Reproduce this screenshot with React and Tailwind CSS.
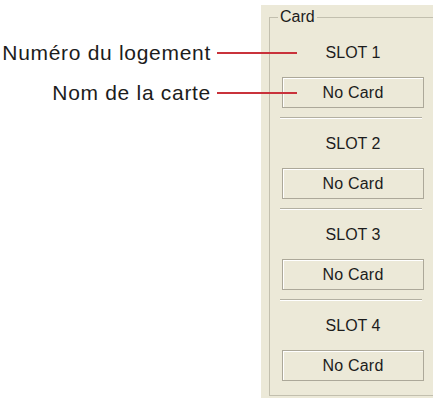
import React from "react";

const slots = ["SLOT 1", "SLOT 2", "SLOT 3", "SLOT 4"];

function Callout({ label }) {
  return (
    <div className="flex h-[24px] items-center justify-end">
      <span className="text-[21px] leading-[24px] tracking-[0.7px] text-[#1c1c1c]">{label}</span>
      <span className="relative z-10 ml-[6px] mr-[-36px] h-[2px] w-[80px] bg-[#c9323b]" />
    </div>
  );
}

function Slot({ name, first }) {
  return (
    <div className="flex flex-col">
      {!first && (
        <div className="ml-[10px] w-[142px] border-t border-b border-t-[#b3b0a2] border-b-white" />
      )}
      <div className={`${first ? "mt-[25px]" : "mt-[15px]"} h-[20px] pl-[12px] w-[154px] text-center text-[16px] leading-[20px] text-[#1c1c1c]`}>
        {name}
      </div>
      <div className="ml-[12px] mt-[14px] mb-[9px] flex h-[31px] w-[142px] items-center justify-center border border-[#aca899] text-[16px] tracking-[0.2px] text-[#1c1c1c] shadow-[inset_1px_1px_0_#fff]">
        No Card
      </div>
    </div>
  );
}

export default function App() {
  return (
    <div
      className="flex h-[401px] w-[437px] overflow-hidden bg-white"
      style={{ fontFamily: '"Liberation Sans", Arial, sans-serif' }}
    >
      <div className="flex w-[261px] shrink-0 flex-col pt-[41px]">
        <Callout label="Numéro du logement" />
        <div className="mt-[16px]">
          <Callout label="Nom de la carte" />
        </div>
      </div>

      <div className="mt-[5px] h-[393px] w-[172px] shrink-0 bg-[#ece9d8] pt-[12px] pl-[8px]">
        <div className="relative h-[379px] border-t border-l border-b border-[#c2bfae]">
          <span className="absolute -top-[10px] left-[8px] bg-[#ece9d8] px-[2px] text-[16px] leading-[18px] text-[#1c1c1c]">
            Card
          </span>
          {slots.map((s, i) => (
            <Slot key={s} name={s} first={i === 0} />
          ))}
        </div>
      </div>
    </div>
  );
}
